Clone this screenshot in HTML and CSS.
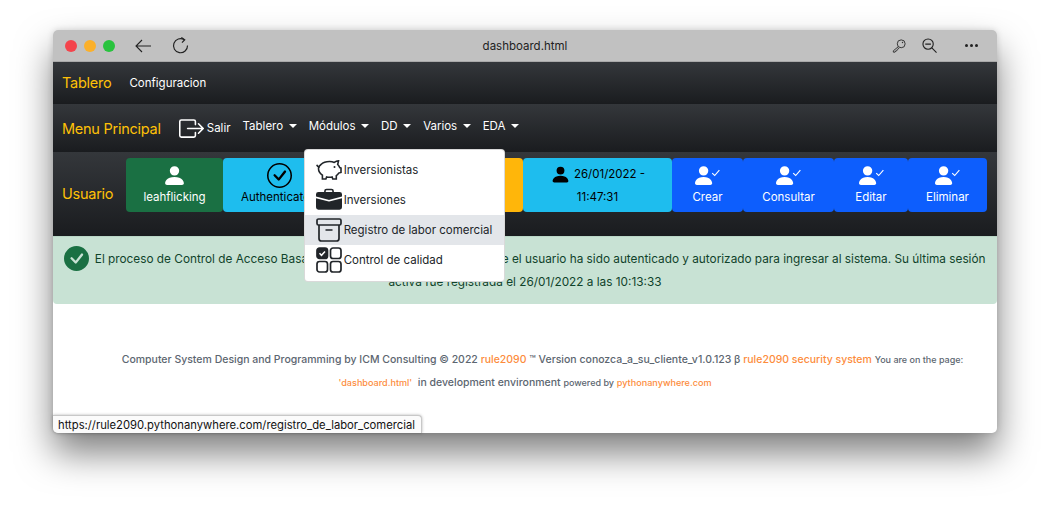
FILE: index.html
```html
<!DOCTYPE html>
<html lang="es">
<head>
  <meta charset="UTF-8">
  <title>dashboard.html</title>
  <link rel="stylesheet" href="styles.css">
</head>
<body>
  <div class="window">
    <div class="titlebar">
      <div class="lights"><span class="light red"></span><span class="light yellow"></span><span class="light green"></span></div>
      <svg class="tb-icon back" viewBox="0 0 18 16" width="18" height="16"><path d="M17 8H2M8 2L2 8l6 6" fill="none" stroke="#222" stroke-width="1.1"/></svg>
      <svg class="tb-icon reload" viewBox="0 0 16 16" width="17" height="17"><path d="M11.5 2.6A6.6 6.6 0 1 0 14.6 8" fill="none" stroke="#222" stroke-width="1.1"/><path d="M8.8 0.4l3.2 2.2-2.6 2.7" fill="none" stroke="#222" stroke-width="1.1"/></svg>
      <div class="title">dashboard.html</div>
      <svg class="tb-icon key" viewBox="0 0 16 16" width="14" height="14"><circle cx="10.5" cy="5.5" r="4.5" fill="none" stroke="#333" stroke-width="1.1"/><path d="M7.3 8.7L1.5 13.5v1.5h2l.8-1.5h1.2l.5-1.5 2.3-1.6" fill="none" stroke="#333" stroke-width="1.1"/><circle cx="12" cy="4" r=".8" fill="#333"/></svg>
      <svg class="tb-icon zoom" viewBox="0 0 16 16" width="15" height="15"><circle cx="6.5" cy="6.5" r="5.5" fill="none" stroke="#222" stroke-width="1.2"/><path d="M10.5 10.5L15.5 15.5M3.5 6.5h6" fill="none" stroke="#222" stroke-width="1.2"/></svg>
      <div class="dots"><span></span><span></span><span></span></div>
    </div>

    <nav class="nav nav-top">
      <a class="brand">Tablero</a>
      <a class="nav-link config">Configuracion</a>
    </nav>

    <nav class="nav nav-main">
      <a class="brand">Menu Principal</a>
      <a class="nav-link salir">
        <svg viewBox="0 0 16 16" width="25" height="25" fill="#fff"><path d="M10 12.5a.5.5 0 0 1-.5.5h-8a.5.5 0 0 1-.5-.5v-9a.5.5 0 0 1 .5-.5h8a.5.5 0 0 1 .5.5v2a.5.5 0 0 0 1 0v-2A1.5 1.5 0 0 0 9.5 2h-8A1.5 1.5 0 0 0 0 3.5v9A1.5 1.5 0 0 0 1.5 14h8a1.5 1.5 0 0 0 1.5-1.5v-2a.5.5 0 0 0-1 0v2z"/><path d="M15.854 8.354a.5.5 0 0 0 0-.708l-3-3a.5.5 0 0 0-.708.708L14.293 7.5H5.5a.5.5 0 0 0 0 1h8.793l-2.147 2.146a.5.5 0 0 0 .708.708l3-3z"/></svg>
        Salir
      </a>
      <ul class="menu">
        <li><a class="nav-link caret">Tablero</a></li>
        <li class="open">
          <a class="nav-link caret">Módulos</a>
          <div class="dropdown">
            <a class="dd-item">
              <svg viewBox="0 0 26 24" width="26" height="24" fill="none" stroke="#212529" stroke-width="1.6"><path d="M5 6.5C7 4.5 10 3.5 13.5 3.5c2 0 3.500.3 4.800.9 1.200-.9 2.700-1.500 4.200-1.500l-.8 3.600c1 .9 1.600 2 2 3.100l1.300.4v4.500l-2.300.6c-.6 1-1.500 1.900-2.400 2.500V21h-3.500l-.7-2c-1.500.3-4 .3-5.500 0l-.7 2H6.400v-3.800C4 15.500 2.500 13 2.500 10.500c0-1.500 1-3 2.500-4z"/><path d="M.8 6.800c.5 1.700 1.800 2.300 2.800 2"/><circle cx="18.500" cy="9" r="1" fill="#212529" stroke="none"/></svg>
              Inversionistas
            </a>
            <a class="dd-item">
              <svg viewBox="0 0 16 16" width="26" height="26" fill="#212529"><path d="M6.5 1A1.5 1.5 0 0 0 5 2.500V3H1.500A1.500 1.500 0 0 0 0 4.500v1.384l7.614 2.030a1.500 1.500 0 0 0 .772 0L16 5.884V4.500A1.500 1.500 0 0 0 14.500 3H11v-.5A1.500 1.500 0 0 0 9.500 1h-3zm0 1h3a.5.5 0 0 1 .5.5V3H6v-.5a.5.5 0 0 1 .5-.5z"/><path d="M0 12.500A1.500 1.500 0 0 0 1.500 14h13a1.500 1.500 0 0 0 1.500-1.500V6.850L8.129 8.947a.5.5 0 0 1-.258 0L0 6.850v5.650z"/></svg>
              Inversiones
            </a>
            <a class="dd-item active">
              <svg viewBox="0 0 26 26" width="26" height="26" fill="none" stroke="#212529" stroke-width="1.7"><rect x="1" y="2" width="24" height="6" rx="1.500"/><path d="M3 8v13.500A2.500 2.500 0 0 0 5.500 24h15a2.500 2.500 0 0 0 2.500-2.500V8M9.500 13h7"/></svg>
              Registro de labor comercial
            </a>
            <a class="dd-item">
              <svg viewBox="0 0 26 26" width="26" height="26" fill="none" stroke="#212529" stroke-width="1.7"><rect x="1" y="1" width="10.500" height="10.500" rx="2.500" fill="#212529"/><path d="M3.500 6.300l2 2 3.500-3.800" stroke="#fff" stroke-width="1.500"/><rect x="14.500" y="1" width="10.500" height="10.500" rx="2.500"/><rect x="1" y="14.500" width="10.500" height="10.500" rx="2.500"/><rect x="14.500" y="14.500" width="10.500" height="10.500" rx="2.500"/></svg>
              Control de calidad
            </a>
          </div>
        </li>
        <li><a class="nav-link caret">DD</a></li>
        <li><a class="nav-link caret">Varios</a></li>
        <li><a class="nav-link caret">EDA</a></li>
      </ul>
    </nav>

    <nav class="nav nav-user">
      <a class="brand">Usuario</a>
      <div class="tiles">
        <div class="tile green w-user">
          <svg class="ico" viewBox="0 0 16 16" width="25" height="25" fill="#fff"><path d="M3 14s-1 0-1-1 1-4 6-4 6 3 6 4-1 1-1 1H3zm5-6a3 3 0 1 0 0-6 3 3 0 0 0 0 6z"/></svg>
          leahflicking
        </div>
        <div class="tile cyan w-auth">
          <svg class="ico" viewBox="0 0 16 16" width="25" height="25" fill="#000"><path d="M8 15A7 7 0 1 1 8 1a7 7 0 0 1 0 14zm0 1A8 8 0 1 0 8 0a8 8 0 0 0 0 16z"/><path d="M10.970 4.970a.235.235 0 0 0-.02.022L7.477 9.417 5.384 7.323a.750.750 0 0 0-1.060 1.060L6.970 11.030a.750.750 0 0 0 1.079-.02l3.992-4.990a.750.750 0 0 0-1.071-1.050z"/></svg>
          Authenticated
        </div>
        <div class="tile amber w-role"></div>
        <div class="tile cyan w-date">
          <span class="date-line">
            <svg viewBox="0 0 16 16" width="21" height="21" fill="#000"><path d="M3 14s-1 0-1-1 1-4 6-4 6 3 6 4-1 1-1 1H3zm5-6a3 3 0 1 0 0-6 3 3 0 0 0 0 6z"/></svg>
            26/01/2022 -
          </span>
          <span class="time-line">11:47:31</span>
        </div>
        <div class="tile blue w-crear">
          <svg class="ico" viewBox="0 0 16 16" width="25" height="25"><use href="#person-check"/></svg>
          Crear
        </div>
        <div class="tile blue w-consultar">
          <svg class="ico" viewBox="0 0 16 16" width="25" height="25"><use href="#person-check"/></svg>
          Consultar
        </div>
        <div class="tile blue w-editar">
          <svg class="ico" viewBox="0 0 16 16" width="25" height="25"><use href="#person-check"/></svg>
          Editar
        </div>
        <div class="tile blue w-eliminar">
          <svg class="ico" viewBox="0 0 16 16" width="25" height="25"><use href="#person-check"/></svg>
          Eliminar
        </div>
      </div>
    </nav>

    <div class="alert">
      <svg viewBox="0 0 16 16" width="25" height="25" fill="#1a7043"><path d="M16 8A8 8 0 1 1 0 8a8 8 0 0 1 16 0zm-3.970-3.030a.750.750 0 0 0-1.080.022L7.477 9.417 5.384 7.323a.750.750 0 0 0-1.060 1.060L6.970 11.030a.750.750 0 0 0 1.079-.02l3.992-4.990a.750.750 0 0 0-.01-1.050z" fill-rule="evenodd"/></svg>
      El proceso de Control de Acceso Basado en Roles RBAC ha verificado que el usuario ha sido autenticado y autorizado para ingresar al sistema. Su última sesión activa fue registrada el 26/01/2022 a las 10:13:33
    </div>

    <footer class="footer">
      <p class="foot-first">Computer System Design and Programming by ICM Consulting © 2022 <a>rule2090</a> ™ Version conozca_a_su_cliente_v1.0.123 β <a>rule2090 security system</a> <small>You are on the page:</small></p>
      <p><a class="page-name">'dashboard.html'</a>&nbsp; in development environment <small>powered by</small> <a class="host">pythonanywhere.com</a></p>
    </footer>

    <div class="status">https://rule2090.pythonanywhere.com/registro_de_labor_comercial</div>
  </div>

  <svg class="defs" width="0" height="0">
    <symbol id="person-check" viewBox="0 0 16 16">
      <path fill="#fff" d="M1 14s-1 0-1-1 1-4 5.500-4 5.500 3 5.500 4-1 1-1 1H1zm4.500-6a3 3 0 1 0 0-6 3 3 0 0 0 0 6z"/>
      <path fill="none" stroke="#fff" stroke-width=".7" d="M11 6.500l1.600 1.500 3-3.500"/>
    </symbol>
  </svg>
</body>
</html>
```

FILE: styles.css
```css
* { box-sizing: border-box; }
html, body { margin: 0; height: 100%; overflow: hidden; background: #fff; }
body { font-family: Inter, "Liberation Sans", sans-serif; font-size: 11.5px; padding: 30px 53px 0; }
.defs { display: block; }

.window { position: relative; width: 944px; height: 403px; border-radius: 5px; background: #fff; box-shadow: 0 20px 36px rgba(0,0,0,.5), 0 0 6px rgba(0,0,0,.15); }

/* browser bar */
.titlebar { display: flex; align-items: center; height: 32px; padding: 0 19px 0 12px; background: #c1c1c1; border-bottom: 1px solid #a9a9a9; border-radius: 5px 5px 0 0; }
.lights { display: flex; gap: 7px; }
.light { width: 12px; height: 12px; border-radius: 50%; }
.red { background: #f4444c; }
.yellow { background: #fbb02a; }
.green { background: #29c33e; }
.back { margin-left: 19px; }
.reload { margin-left: 20px; }
.title { flex: 1; text-align: center; color: #222; padding-right: 31px; }
.key { margin-right: 16px; }
.zoom { margin-right: 28px; }
.dots { display: flex; gap: 2px; }
.dots span { width: 3px; height: 3px; border-radius: 50%; background: #222; }

/* dark nav rows */
.nav { display: flex; background: linear-gradient(#34373b, #1a1c1f); padding-left: 9px; }
.brand { color: #ffc107; font-size: 14.5px; letter-spacing: -.25px; }
.nav-link { color: #fff; font-size: 11.5px; }
.nav-top { height: 42px; align-items: center; padding-bottom: 2px; }
.config { margin-left: 18px; padding-top: 2px; }
.nav-main { height: 48px; align-items: center; }
.salir { display: flex; align-items: center; gap: 3px; margin-left: 18px; }
.menu { display: flex; list-style: none; margin: 0 0 5px; padding: 0; }
.menu li { position: relative; margin-left: 12px; }
.caret::after { content: ""; display: inline-block; margin-left: 5.5px; vertical-align: 2px; border-top: 4.500px solid #fff; border-left: 4.500px solid transparent; border-right: 4.500px solid transparent; }

.dropdown { position: absolute; z-index: 5; top: 30px; left: -5px; width: 201px; height: 133px; padding: 5px 0; background: #fff; border: 1px solid rgba(0,0,0,.15); border-radius: 4px; }
.dd-item { display: flex; align-items: center; gap: 2px; height: 30px; padding-left: 11px; color: #212529; white-space: nowrap; }
.dd-item.active { background: #e3e6ea; }

/* user row */
.nav-user { height: 84px; padding-top: 6px; }
.nav-user .brand { margin-top: 27px; width: 64px; }
.tiles { display: flex; height: 54px; }
.tile { display: flex; flex-direction: column; align-items: center; padding-top: 5px; border-radius: 4px; overflow: hidden; white-space: nowrap; line-height: 17px; }
.ico { margin-bottom: 1px; }
.green { color: #fff; }
.tile.green { background: #1a7043; }
.cyan { background: #1ebdee; color: #000; }
.amber { background: #ffb60a; }
.blue { background: #0d5efd; color: #fff; }
.w-user { width: 97px; }
.w-auth { width: 112px; }
.w-role { width: 188px; }
.w-date { width: 149px; }
.w-crear { width: 71px; }
.w-consultar { width: 91px; }
.w-editar { width: 74px; }
.w-eliminar { width: 79px; }
.date-line { display: flex; align-items: center; gap: 3px; height: 23px; }
.time-line { margin-top: 3px; }

.alert { height: 68px; padding: 11px 10px; text-align: center; font-size: 11.8px; line-height: 23px; color: #10432b; background: #c8e2d4; border-top: 1px solid #b9d6c6; border-radius: 0 0 4px 4px; }
.alert svg { vertical-align: middle; margin: -4px 2px -2px 0; }

.footer { padding-top: 48px; text-align: center; font-size: 10.5px; font-weight: 500; color: #5c6670; }
.footer p { margin: 0 0 8px; line-height: 15px; }
.footer a { color: #fd8c3c; }
.footer small { font-size: 9px; }
.footer .page-name, .footer .host { font-size: 9.1px; }
.foot-first { padding-left: 35px; white-space: nowrap; }

.status { position: absolute; left: 0; bottom: 0; height: 18px; padding: 0 6px 0 5px; font-size: 11.25px; line-height: 18px; color: #111; white-space: nowrap; background: #fbfbfb; border: 1px solid #c8c8c8; border-left: 0; border-bottom: 0; border-radius: 0 4px 0 5px; box-shadow: 0 0 3px rgba(0,0,0,.3); }
```
